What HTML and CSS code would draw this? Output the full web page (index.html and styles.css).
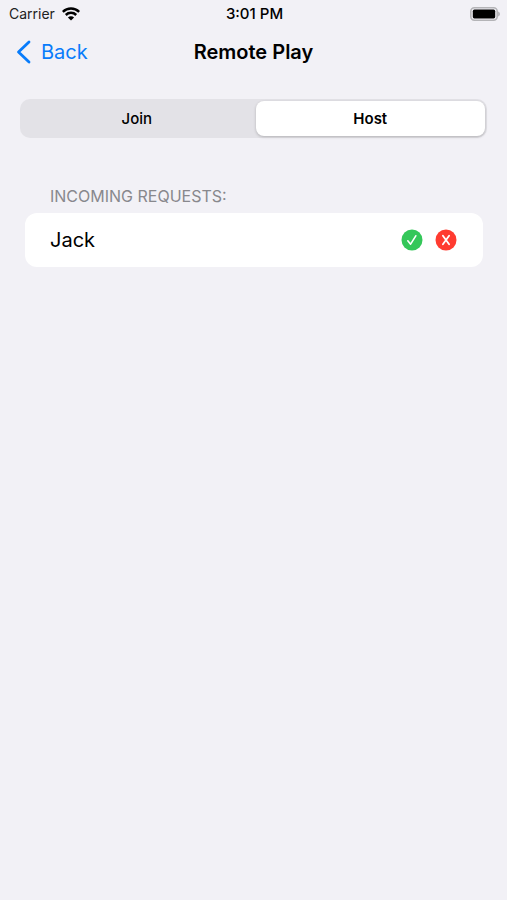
FILE: index.html
```html
<!DOCTYPE html>
<html lang="en">
<head>
<meta charset="utf-8">
<meta name="viewport" content="width=device-width, initial-scale=1">
<title>Remote Play</title>
<link rel="stylesheet" href="styles.css">
</head>
<body>
<div class="status">
  <div class="carrier">
    <span>Carrier</span>
    <svg class="wifi" viewBox="0 0 18 14" aria-hidden="true">
      <path d="M.8 4.9a11.6 11.6 0 0 1 16.4 0M3.8 8a7.4 7.4 0 0 1 10.4 0" fill="none" stroke="#000" stroke-width="2.5"/>
      <path d="M9 13.6 5.9 10.5a4.4 4.4 0 0 1 6.2 0Z"/>
    </svg>
  </div>
  <time class="clock">3:01 PM</time>
  <svg class="battery" viewBox="0 0 30 14" aria-hidden="true">
    <rect x=".8" y=".8" width="26.4" height="12.4" rx="3.6" fill="#f2f1f6" stroke="#b4b4b7" stroke-width="1.6"/>
    <rect x="2.8" y="2.6" width="22.4" height="8.8" rx="1.6"/>
    <path d="M28.2 4.6c2.2.8 2.2 4 0 4.8Z" fill="#acacb0"/>
  </svg>
</div>
<header class="nav">
  <a class="back" href="#">
    <svg class="chevron" viewBox="0 0 16 24" aria-hidden="true"><path d="M13 2 2.5 12 13 22" fill="none" stroke="currentColor" stroke-width="2.8" stroke-linecap="round" stroke-linejoin="round"/></svg>
    <span>Back</span>
  </a>
  <h1 class="title">Remote Play</h1>
</header>
<main>
  <div class="segments" role="radiogroup" aria-label="Mode">
    <label class="segment"><input type="radio" name="mode"><span>Join</span></label>
    <label class="segment"><input type="radio" name="mode" checked><span>Host</span></label>
  </div>
  <section class="requests">
    <h2 class="heading">INCOMING REQUESTS:</h2>
    <ul class="list">
      <li class="row">
        <span class="name">Jack</span>
        <button class="action" type="button" aria-label="Accept">
          <svg viewBox="0 0 22 22"><circle cx="11" cy="11" r="10.5" fill="#34c759"/><path d="m6.8 11.8 2.8 3.4 5.2-8.4" fill="none" stroke="#fff" stroke-width="1.6" stroke-linecap="round" stroke-linejoin="round"/></svg>
        </button>
        <button class="action" type="button" aria-label="Decline">
          <svg viewBox="0 0 22 22"><circle cx="11" cy="11" r="10.5" fill="#ff3b30"/><path d="m7.9 6.8 6.2 8.4M14.1 6.8l-6.2 8.4" fill="none" stroke="#fff" stroke-width="1.8" stroke-linecap="round"/></svg>
        </button>
      </li>
    </ul>
  </section>
</main>
</body>
</html>
```
FILE: styles.css
```css
* { box-sizing: border-box; }

body {
  margin: 0;
  min-height: 100vh;
  background: #f2f1f6;
  color: #000;
  font-family: Inter, "Liberation Sans", sans-serif;
}

.status {
  display: grid;
  grid-template-columns: 1fr auto 1fr;
  align-items: center;
  height: 27px;
  padding: 0 7px 0 9px;
  font-size: 14px;
}

.carrier {
  display: flex;
  align-items: center;
  gap: 7px;
  color: #222;
}

.wifi { width: 18px; height: 14px; }
.clock { font-size: 15px; font-weight: 500; }
.battery { width: 30px; height: 14px; justify-self: end; }

.nav {
  display: grid;
  grid-template-columns: 1fr auto 1fr;
  align-items: center;
  height: 50px;
  padding: 0 16px;
}

.back {
  display: flex;
  align-items: center;
  gap: 9px;
  color: #087cfb;
  font-size: 20px;
  text-decoration: none;
}

.chevron { width: 16px; height: 24px; }

.title {
  margin: 0;
  font-size: 20px;
  font-weight: 600;
}

.segments {
  display: grid;
  grid-template-columns: 1fr 1fr;
  gap: 4px;
  height: 39px;
  margin: 22px 20px 0;
  padding: 2px;
  border-radius: 10px;
  background: #e3e2e7;
}

.segment {
  display: flex;
  position: relative;
}

.segment input {
  position: absolute;
  inset: 0;
  margin: 0;
  appearance: none;
}

.segment span {
  display: flex;
  flex: 1;
  align-items: center;
  justify-content: center;
  border-radius: 8px;
  font-size: 15px;
  font-weight: 500;
}

.segment input:checked + span {
  background: #fff;
  box-shadow: 0 1px 3px rgba(0, 0, 0, .22);
  font-weight: 600;
}

.requests { margin: 46px 24px 0 25px; }

.heading {
  margin: 0;
  padding: 0 25px 5px;
  color: #88888d;
  font-size: 16px;
  font-weight: 400;
  line-height: 24px;
}

.list {
  margin: 0;
  padding: 0;
  border-radius: 12px;
  background: #fff;
  list-style: none;
}

.row {
  display: flex;
  align-items: center;
  gap: 12px;
  height: 54px;
  padding: 0 26px 0 25px;
}

.name { flex: 1; font-size: 20px; }

.action {
  width: 22px;
  height: 22px;
  padding: 0;
  border: 0;
  background: none;
}

.action svg { display: block; }
```
